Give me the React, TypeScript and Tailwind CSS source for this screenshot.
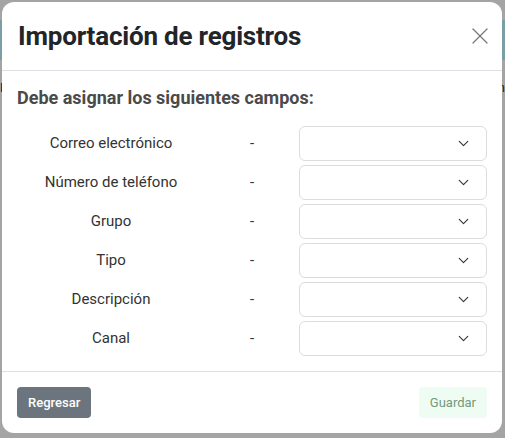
import { X, ChevronDown } from 'lucide-react'

const campos = ['Correo electrónico', 'Número de teléfono', 'Grupo', 'Tipo', 'Descripción', 'Canal']

function Fila({ label }: { label: string }) {
  return (
    <div className="flex items-center h-[39px]">
      <div className="w-[40%] text-center text-[15px] text-[#333]">{label}</div>
      <div className="w-[20%] text-center text-[15px] text-[#333]">-</div>
      <div className="w-[40%]">
        <div className="h-[35px] border border-[#dcdcdc] rounded-md bg-white flex items-center justify-end pr-[14px]">
          <ChevronDown className="w-[17px] h-[17px] text-[#333]" strokeWidth={1.6} />
        </div>
      </div>
    </div>
  )
}

export default function App() {
  return (
    <div className="relative w-[505px] h-[438px] bg-[#a4a4a4] overflow-hidden font-['Roboto',sans-serif]">
      {/* page behind the overlay */}
      <div className="h-[20px]" />
      <div className="h-[40px] bg-[#7b9da5]" />
      <div className="flex justify-between pt-[18px] text-[13px] text-[#222]">
        <span>E</span>
        <span>n</span>
      </div>

      <div className="absolute left-[2px] top-[2px] w-[500px] h-[431px] bg-white rounded-[12px] flex flex-col">
        <div className="h-[69px] flex items-center justify-between pl-[16px] pr-[8px] border-b border-[#dee2e6]">
          <h1 className="text-[26px] font-bold text-[#212529] tracking-[-0.2px]">Importación de registros</h1>
          <X className="w-[28px] h-[28px] text-[#777]" strokeWidth={1.1} />
        </div>

        <div className="flex-1 px-[15px] pt-[13px]">
          <p className="text-[18px] font-bold text-[#4a4a4a] mb-[13px]">Debe asignar los siguientes campos:</p>
          {campos.map((c) => (
            <Fila key={c} label={c} />
          ))}
        </div>

        <div className="h-[62px] border-t border-[#dee2e6] flex items-center justify-between px-[15px]">
          <button className="h-[31px] px-[11px] rounded-[4px] bg-[#6c757d] text-white text-[13px] font-medium">
            Regresar
          </button>
          <button className="h-[31px] px-[11px] rounded-[4px] bg-[#effcf3] text-[#6f9a80] text-[13px]">
            Guardar
          </button>
        </div>
      </div>
    </div>
  )
}
